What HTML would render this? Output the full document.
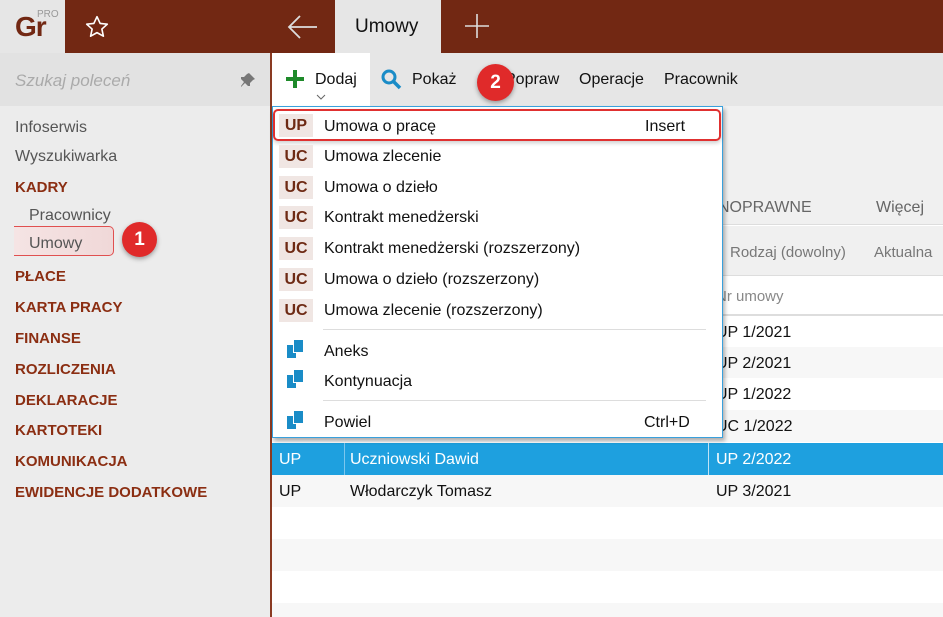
<!DOCTYPE html>
<html><head><meta charset="utf-8"><style>
*{margin:0;padding:0;box-sizing:border-box}
html,body{width:943px;height:617px;overflow:hidden}
body{position:relative;font-family:"Liberation Sans",sans-serif;background:#fff;color:#111}
.a{position:absolute;white-space:nowrap}
.side{font-size:16px;color:#555}
.hd{font-size:15px;color:#8b2e12;font-weight:bold}
.mi{font-size:16px;color:#111}
.badge{position:absolute;width:34px;height:23px;background:#f0e6e3;color:#6e2a14;font-weight:bold;font-size:16px;text-align:center;line-height:23px}
.row{position:absolute;left:272px;width:671px;height:32px}
.cell{position:absolute;font-size:16px;top:8px}
.doc{position:absolute;width:16px;height:18px}
.doc:before{content:"";position:absolute;left:0;top:5px;width:9px;height:13px;background:#1a8cc7}
.doc:after{content:"";position:absolute;left:6px;top:0;width:9px;height:12px;background:#1a8cc7;border-left:1px solid #fff;border-bottom:1px solid #fff}
</style></head><body>
<div class="a" style="left:0;top:0;width:65px;height:53px;background:#e6e6e6"></div>
<div class="a" style="left:15px;top:11px;font-size:28px;color:#722813;font-weight:bold;letter-spacing:-1px">Gr</div>
<div class="a" style="left:37px;top:9px;font-size:10px;color:#999">PRO</div>
<div class="a" style="left:65px;top:0;width:270px;height:53px;background:#722813"></div>
<svg class="a" style="left:84px;top:14px" width="26" height="26" viewBox="0 0 24 24"><path d="M12 2.5l2.9 6.2 6.6.7-5 4.5 1.4 6.6L12 17.2l-5.9 3.3 1.4-6.6-5-4.5 6.6-.7z" fill="none" stroke="#fff" stroke-width="1.5" stroke-linejoin="round"/></svg>
<svg class="a" style="left:287px;top:14px" width="32" height="26" viewBox="0 0 32 26"><path d="M2 13h28M13 2L2 13l11 11" fill="none" stroke="#ddd" stroke-width="1.8"/></svg>
<div class="a" style="left:335px;top:0;width:106px;height:53px;background:#e6e6e6"></div>
<div class="a" style="left:355px;top:16px;font-size:19px;color:#111">Umowy</div>
<div class="a" style="left:441px;top:0;width:502px;height:53px;background:#722813"></div>
<svg class="a" style="left:464px;top:13px" width="26" height="26"><path d="M13 1v24M1 13h24" stroke="#ddd" stroke-width="1.6"/></svg>
<div class="a" style="left:0;top:53px;width:270px;height:564px;background:#ececec"></div>
<div class="a" style="left:0;top:53px;width:270px;height:53px;background:#e2e2e2"></div>
<div class="a" style="left:15px;top:71px;font-size:17px;color:#aaa;font-style:italic">Szukaj poleceń</div>
<svg class="a" style="left:240px;top:72px" width="16" height="16" viewBox="0 0 16 16"><path d="M9 1l6 6-2 1-3 3 0 3-2 0-3-3-4 4 0-1 3-4-3-3 0-2 3 0 3-3z" fill="#777"/></svg>
<div class="a" style="left:270px;top:53px;width:2px;height:564px;background:#8a3a22"></div>
<div class="a side" style="left:15px;top:119px">Infoserwis</div>
<div class="a side" style="left:15px;top:148px">Wyszukiwarka</div>
<div class="a hd" style="left:15px;top:179px">KADRY</div>
<div class="a side" style="left:29px;top:207px">Pracownicy</div>
<div class="a" style="left:14px;top:226px;width:100px;height:30px;border:1.5px solid #e05050;border-left:none;border-radius:0 5px 5px 0;background:linear-gradient(90deg,#f5e4e4,#f0d8d8)"></div>
<div class="a side" style="left:29px;top:235px">Umowy</div>
<div class="a" style="left:122px;top:222px;width:35px;height:35px;border-radius:50%;background:#e02a2a;color:#fff;font-size:19px;font-weight:bold;text-align:center;line-height:35px;box-shadow:0 2px 5px rgba(0,0,0,.35)">1</div>
<div class="a hd" style="left:15px;top:268px">PŁACE</div>
<div class="a hd" style="left:15px;top:299px">KARTA PRACY</div>
<div class="a hd" style="left:15px;top:330px">FINANSE</div>
<div class="a hd" style="left:15px;top:361px">ROZLICZENIA</div>
<div class="a hd" style="left:15px;top:392px">DEKLARACJE</div>
<div class="a hd" style="left:15px;top:422px">KARTOTEKI</div>
<div class="a hd" style="left:15px;top:453px">KOMUNIKACJA</div>
<div class="a hd" style="left:15px;top:484px">EWIDENCJE DODATKOWE</div>
<div class="a" style="left:272px;top:53px;width:671px;height:53px;background:#e6e6e6"></div>
<div class="a" style="left:272px;top:53px;width:98px;height:53px;background:#fff"></div>
<svg class="a" style="left:286px;top:70px" width="18" height="18"><path d="M9 0v18M0 9h18" stroke="#1e8a2a" stroke-width="4"/></svg>
<div class="a" style="left:315px;top:71px;font-size:16px">Dodaj</div>
<svg class="a" style="left:316px;top:94px" width="10" height="6"><path d="M1 1l4 4 4-4" fill="none" stroke="#666"/></svg>
<svg class="a" style="left:381px;top:69px" width="22" height="22"><circle cx="8" cy="8" r="6" fill="none" stroke="#1a8cc7" stroke-width="3"/><path d="M12 12l7 7" stroke="#1a8cc7" stroke-width="3.5"/></svg>
<div class="a" style="left:412px;top:71px;font-size:16px">Pokaż</div>
<div class="a" style="left:505px;top:71px;font-size:16px">Popraw</div>
<div class="a" style="left:579px;top:71px;font-size:16px">Operacje</div>
<div class="a" style="left:664px;top:71px;font-size:16px">Pracownik</div>
<div class="a" style="left:477px;top:64px;width:37px;height:37px;border-radius:50%;background:#e02a2a;color:#fff;font-size:19px;font-weight:bold;text-align:center;line-height:37px;box-shadow:0 2px 5px rgba(0,0,0,.35)">2</div>
<div class="a" style="left:272px;top:106px;width:671px;height:85px;background:#f0f0f0"></div>
<div class="a" style="left:272px;top:190px;width:671px;height:35px;background:#f0f0f0;border-bottom:1px solid #ddd"></div>
<div class="a" style="left:718px;top:199px;font-size:16px;color:#666">NOPRAWNE</div>
<div class="a" style="left:876px;top:199px;font-size:16px;color:#666">Więcej</div>
<div class="a" style="left:272px;top:226px;width:671px;height:50px;background:#f0f0f0;border-bottom:1px solid #ddd"></div>
<div class="a" style="left:730px;top:244px;font-size:15px;color:#777">Rodzaj (dowolny)</div>
<div class="a" style="left:874px;top:244px;font-size:15px;color:#777">Aktualna</div>
<div class="a" style="left:272px;top:277px;width:671px;height:39px;border-bottom:2px solid #ddd"></div>
<div class="a" style="left:716px;top:288px;font-size:15px;color:#888">Nr umowy</div>
<div class="row" style="top:316px;background:#fff"><div class="cell" style="left:444px">UP 1/2021</div></div>
<div class="row" style="top:347px;background:#f7f7f7"><div class="cell" style="left:444px">UP 2/2021</div></div>
<div class="row" style="top:378px;background:#fff"><div class="cell" style="left:444px">UP 1/2022</div></div>
<div class="row" style="top:410px;background:#f7f7f7"><div class="cell" style="left:444px">UC 1/2022</div></div>
<div class="row" style="top:443px;background:#1ea0df;color:#fff"><div class="cell" style="left:7px">UP</div><div class="cell" style="left:78px">Uczniowski Dawid</div><div class="cell" style="left:444px">UP 2/2022</div><div class="a" style="left:72px;top:0;width:1px;height:32px;background:#7cc7ee"></div><div class="a" style="left:436px;top:0;width:1px;height:32px;background:#bfe3f6"></div></div>
<div class="row" style="top:475px;background:#f7f7f7"><div class="cell" style="left:7px">UP</div><div class="cell" style="left:78px">Włodarczyk Tomasz</div><div class="cell" style="left:444px">UP 3/2021</div></div>
<div class="row" style="top:507px;background:#fff"></div>
<div class="row" style="top:539px;background:#f7f7f7"></div>
<div class="row" style="top:571px;background:#fff"></div>
<div class="row" style="top:603px;height:14px;background:#f7f7f7"></div>
<div class="a" style="left:272px;top:106px;width:451px;height:332px;background:#fff;border:1px solid #39a0dc;box-shadow:2px 3px 4px rgba(0,0,0,.3)"></div>
<div class="a" style="left:273px;top:109px;width:448px;height:32px;border:2px solid #e03030;border-radius:5px;box-shadow:0 2px 4px rgba(0,0,0,.2)"></div>
<div class="badge" style="left:279px;top:114px">UP</div><div class="a mi" style="left:324px;top:118px">Umowa o pracę</div><div class="a mi" style="left:645px;top:118px">Insert</div>
<div class="badge" style="left:279px;top:145px">UC</div><div class="a mi" style="left:324px;top:148px">Umowa zlecenie</div>
<div class="badge" style="left:279px;top:176px">UC</div><div class="a mi" style="left:324px;top:179px">Umowa o dzieło</div>
<div class="badge" style="left:279px;top:206px">UC</div><div class="a mi" style="left:324px;top:209px">Kontrakt menedżerski</div>
<div class="badge" style="left:279px;top:237px">UC</div><div class="a mi" style="left:324px;top:240px">Kontrakt menedżerski (rozszerzony)</div>
<div class="badge" style="left:279px;top:268px">UC</div><div class="a mi" style="left:324px;top:271px">Umowa o dzieło (rozszerzony)</div>
<div class="badge" style="left:279px;top:299px">UC</div><div class="a mi" style="left:324px;top:302px">Umowa zlecenie (rozszerzony)</div>
<div class="a" style="left:323px;top:329px;width:383px;height:1px;background:#ddd"></div>
<div class="doc" style="left:287px;top:340px"></div><div class="a mi" style="left:324px;top:343px">Aneks</div>
<div class="doc" style="left:287px;top:370px"></div><div class="a mi" style="left:324px;top:373px">Kontynuacja</div>
<div class="a" style="left:323px;top:400px;width:383px;height:1px;background:#ddd"></div>
<div class="doc" style="left:287px;top:411px"></div><div class="a mi" style="left:324px;top:414px">Powiel</div><div class="a mi" style="left:644px;top:414px">Ctrl+D</div>
</body></html>
